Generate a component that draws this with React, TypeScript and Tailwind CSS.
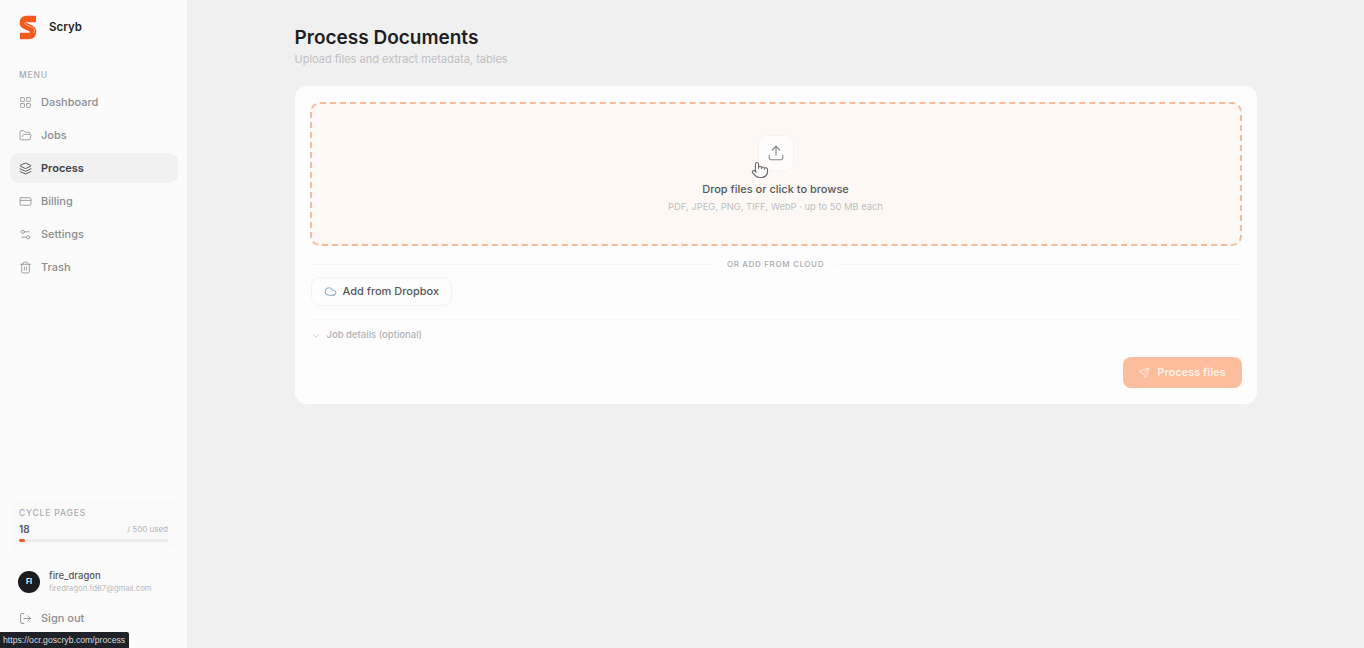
import { Cloud, ChevronDown, CreditCard, FolderOpen, Layers, LayoutGrid, LogOut, Pointer, Send, Settings2, Trash2, Upload } from "lucide-react";

const menu = [
  { label: "Dashboard", icon: LayoutGrid },
  { label: "Jobs", icon: FolderOpen },
  { label: "Process", icon: Layers, active: true },
  { label: "Billing", icon: CreditCard },
  { label: "Settings", icon: Settings2 },
  { label: "Trash", icon: Trash2 },
];

function Logo() {
  return (
    <svg width="20" height="25" viewBox="0 0 20 25" fill="none" className="-mt-[1px]">
      <path
        d="M18 4 L9 4 C4 4 3.5 9.5 7.5 11 L12.5 13.2 C16.5 15 15.5 21 11 21 L2 21"
        stroke="#f4591d"
        strokeWidth="6.4"
        strokeLinejoin="round"
      />
      <path d="M9 7 C7 7.3 6.5 9 8.5 10 L14.5 12.6 C17 14 17 16.5 15.5 18" stroke="#ffc9ad" strokeWidth="0.8" />
    </svg>
  );
}

function Sidebar() {
  return (
    <aside className="flex h-full w-[187px] shrink-0 flex-col bg-[#fbfbfb]">
      <div className="flex h-[55px] items-center gap-[11px] pl-[18px] pt-[1px]">
        <Logo />
        <span className="text-[11.5px] font-semibold text-[#24262b]">Scryb</span>
      </div>
      <div className="pl-[19px] pt-[15px] text-[8.5px] font-medium leading-[11px] tracking-[0.1em] text-[#a9abaf]">MENU</div>
      <nav className="flex flex-col gap-[3px] pl-[10px] pr-[9px] pt-[6px]">
        {menu.map((item) => (
          <div
            key={item.label}
            className={
              item.active
                ? "flex h-[30px] items-center gap-[9px] rounded-[9px] bg-[#f1f1f1] pl-[9px] text-[11px] font-semibold text-[#3f4247]"
                : "flex h-[30px] items-center gap-[9px] rounded-[9px] pl-[9px] text-[11px] font-medium text-[#8b8e93]"
            }
          >
            <item.icon size={13} strokeWidth={1.7} className={item.active ? "text-[#4b4e53]" : "text-[#96999d]"} />
            <span>{item.label}</span>
          </div>
        ))}
      </nav>
      <div className="mt-auto px-[10px]">
        <div className="h-[50px] rounded-[8px] bg-[#f9f9f9] px-[9px] pt-[7px]">
          <div className="text-[8.5px] font-medium leading-[11px] tracking-[0.1em] text-[#a9abaf]">CYCLE PAGES</div>
          <div className="mt-[4px] flex items-center justify-between">
            <span className="text-[10px] font-semibold leading-[12px] text-[#54575c]">18</span>
            <span className="text-[8px] leading-[12px] text-[#b4b6b9]">/ 500 used</span>
          </div>
          <div className="mt-[4px] h-[3px] rounded-full bg-[#ececec]">
            <div className="h-[3px] w-[6px] rounded-full bg-[#f4591d]" />
          </div>
        </div>
        <div className="mt-[19px] flex items-center gap-[9px] pl-[8px]">
          <div className="flex h-[22px] w-[22px] items-center justify-center rounded-full bg-[#1a1c20] text-[7px] font-bold text-white">FI</div>
          <div>
            <div className="text-[9.5px] font-medium leading-[12px] text-[#55585d]">fire_dragon</div>
            <div className="text-[7.8px] leading-[12px] text-[#b8babd]">firedragon.fd67@gmail.com</div>
          </div>
        </div>
        <div className="mb-[21px] mt-[16px] flex h-[17px] items-center gap-[9px] pl-[9px] text-[11px] font-medium text-[#8b8e93]">
          <LogOut size={13} strokeWidth={1.7} />
          <span>Sign out</span>
        </div>
      </div>
    </aside>
  );
}

export default function App() {
  return (
    <div className="relative flex h-[648px] w-full overflow-hidden bg-[#f0f0f0] font-['Inter',sans-serif]">
      <Sidebar />
      <main className="flex-1 pt-[26px]">
        <div className="mx-auto w-[962px]">
          <h1 className="text-[19px] font-semibold leading-[24px] text-[#1d1f24]">Process Documents</h1>
          <p className="mt-[1px] text-[11px] leading-[16px] text-[#c0c1c3]">Upload files and extract metadata, tables</p>
          <div className="mt-[19px] h-[318px] rounded-[12px] bg-[#fdfdfd] px-[15px] pt-[16px]">
            <div className="flex h-[144px] flex-col items-center rounded-[10px] border-2 border-dashed border-[#f3bd9d] bg-[#fdf8f4] pt-[31px]">
              <div className="flex h-[36px] w-[36px] items-center justify-center rounded-[9px] border border-[#f6f3f0] bg-[#fefdfc]">
                <Upload size={18} strokeWidth={1.5} className="text-[#85888c]" />
              </div>
              <div className="mt-[10px] text-[11px] font-medium leading-[16px] text-[#55585d]">Drop files or click to browse</div>
              <div className="mt-[3px] text-[9.4px] leading-[14px] text-[#bdbfc1]">PDF, JPEG, PNG, TIFF, WebP · up to 50 MB each</div>
            </div>
            <div className="mt-[11px] flex items-center gap-[12px]">
              <div className="h-px flex-1 bg-[#f6f6f6]" />
              <span className="text-[8px] font-medium leading-[14px] tracking-[0.08em] text-[#a9abae]">OR ADD FROM CLOUD</span>
              <div className="h-px flex-1 bg-[#f6f6f6]" />
            </div>
            <div className="ml-[1px] mt-[6px] flex h-[29px] w-[141px] items-center gap-[6px] rounded-[9px] border border-[#f3f3f3] pl-[12px] text-[11px] font-medium text-[#55585d]">
              <Cloud size={13} strokeWidth={1.6} className="text-[#7193bd]" />
              <span>Add from Dropbox</span>
            </div>
            <div className="mt-[13px] h-px bg-[#f7f7f7]" />
            <div className="mt-[8px] flex h-[15px] items-center gap-[6px] pl-[1px] text-[9.5px] font-medium text-[#b1b3b6]">
              <ChevronDown size={10} strokeWidth={1.6} />
              <span>Job details (optional)</span>
            </div>
            <div className="mt-[14px] flex justify-end">
              <div className="flex h-[31px] w-[119px] items-center justify-center gap-[7px] rounded-[8px] bg-[#fbbd9b] text-[11px] font-semibold text-[#fdf1ea]">
                <Send size={12} strokeWidth={1.6} />
                <span>Process files</span>
              </div>
            </div>
          </div>
        </div>
      </main>
      <Pointer size={18} strokeWidth={1.5} className="absolute left-[751px] top-[161px] fill-white text-[#66696e]" />
      <div className="absolute bottom-0 left-0 flex h-[16px] w-[129px] items-center rounded-tr-[2px] bg-[#1e2128] pl-[3px] pt-[1px] font-['Liberation_Sans',sans-serif] text-[8.7px] text-[#d8dadd]">
        https://ocr.goscryb.com/process
      </div>
    </div>
  );
}
